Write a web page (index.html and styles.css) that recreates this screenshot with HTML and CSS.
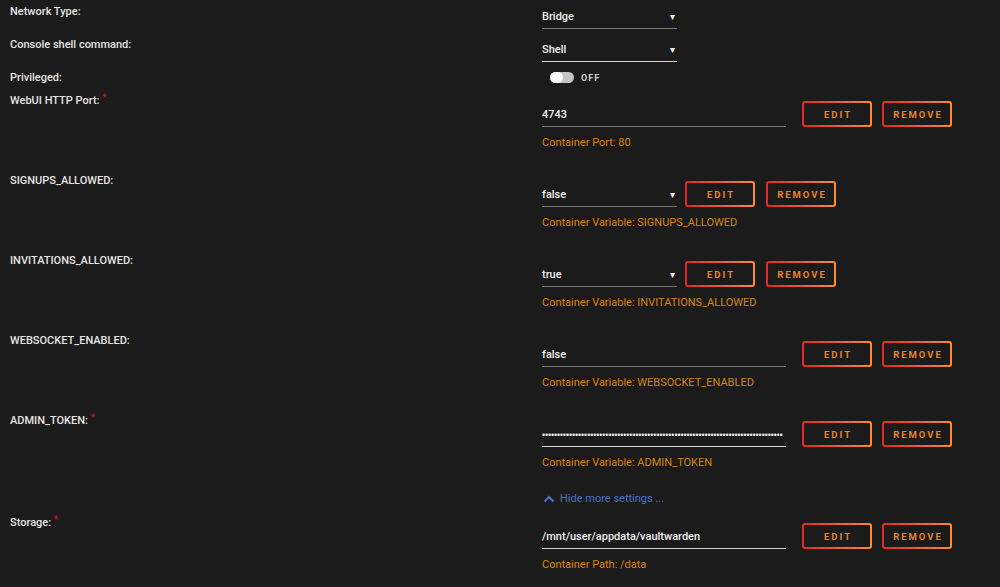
FILE: index.html
```html
<!DOCTYPE html>
<html lang="en">
  <head>
    <meta charset="UTF-8" />
    <meta name="viewport" content="width=device-width, initial-scale=1.0" />
    <title>Update Container</title>
    <link rel="stylesheet" href="styles.css">
  </head>
  <body>
    <div class="form">
      <div class="row plain first">
        <div class="label">Network Type:</div>
        <div class="field">
          <div class="select dim"><span>Bridge</span><span class="caret">▾</span></div>
        </div>
      </div>
      <div class="row plain">
        <div class="label">Console shell command:</div>
        <div class="field">
          <div class="select light"><span>Shell</span><span class="caret">▾</span></div>
        </div>
      </div>
      <div class="row toggle-row">
        <div class="label">Privileged:</div>
        <div class="field">
          <div class="switch"><span class="track"><span class="knob"></span></span><span class="state">OFF</span></div>
        </div>
      </div>

      <div class="row config">
        <div class="label">WebUI HTTP Port: <span class="req">*</span></div>
        <div class="field">
          <div class="line">
            <div class="text dim">4743</div>
            <button class="btn">EDIT</button>
            <button class="btn">REMOVE</button>
          </div>
          <div class="hint">Container Port: 80</div>
        </div>
      </div>

      <div class="row config">
        <div class="label">SIGNUPS_ALLOWED:</div>
        <div class="field">
          <div class="line">
            <div class="select dim"><span>false</span><span class="caret">▾</span></div>
            <button class="btn">EDIT</button>
            <button class="btn">REMOVE</button>
          </div>
          <div class="hint">Container Variable: SIGNUPS_ALLOWED</div>
        </div>
      </div>

      <div class="row config">
        <div class="label">INVITATIONS_ALLOWED:</div>
        <div class="field">
          <div class="line">
            <div class="select dim"><span>true</span><span class="caret">▾</span></div>
            <button class="btn">EDIT</button>
            <button class="btn">REMOVE</button>
          </div>
          <div class="hint">Container Variable: INVITATIONS_ALLOWED</div>
        </div>
      </div>

      <div class="row config">
        <div class="label">WEBSOCKET_ENABLED:</div>
        <div class="field">
          <div class="line">
            <div class="text dim">false</div>
            <button class="btn">EDIT</button>
            <button class="btn">REMOVE</button>
          </div>
          <div class="hint">Container Variable: WEBSOCKET_ENABLED</div>
        </div>
      </div>

      <div class="row config last">
        <div class="label">ADMIN_TOKEN: <span class="req">*</span></div>
        <div class="field">
          <div class="line">
            <div class="text light secret">••••••••••••••••••••••••••••••••••••••••••••••••••••••••••••••••••••••••••••••••</div>
            <button class="btn">EDIT</button>
            <button class="btn">REMOVE</button>
          </div>
          <div class="hint">Container Variable: ADMIN_TOKEN</div>
        </div>
      </div>

      <div class="row more">
        <div class="label"></div>
        <div class="field">
          <a class="toggle-more" href="#">
            <svg width="12" height="8" viewBox="0 0 12 8"><path d="M1.5 6.5 6 2l4.5 4.5" fill="none" stroke="#4a72c4" stroke-width="2.2"/></svg>
            Hide more settings ...
          </a>
        </div>
      </div>

      <div class="row config">
        <div class="label">Storage: <span class="req">*</span></div>
        <div class="field">
          <div class="line">
            <div class="text light">/mnt/user/appdata/vaultwarden</div>
            <button class="btn">EDIT</button>
            <button class="btn">REMOVE</button>
          </div>
          <div class="hint">Container Path: /data</div>
        </div>
      </div>
    </div>
  </body>
</html>
```

FILE: styles.css
```css
body {
  margin: 0;
  padding: 0 0 0 10px;
  background: #1c1b1b;
  color: #f2f2f2;
  font-family: Roboto, "Noto Sans", sans-serif;
  font-size: 11px;
  height: 587px;
  overflow: hidden;
}

.row {
  display: grid;
  grid-template-columns: 532px auto;
}

.label {
  line-height: 14px;
  font-weight: 500;
  color: #e4e4e4;
}

.req {
  color: #c21a1a;
  font-size: 10px;
  vertical-align: top;
  position: relative;
  top: -3px;
}

.first {
  padding-top: 5px;
}

.plain {
  height: 33px;
}

.toggle-row {
  height: 23px;
}

.select,
.text {
  box-sizing: border-box;
  height: 24px;
  display: flex;
  align-items: center;
  justify-content: space-between;
  border-bottom: 1px solid #8a8a8a;
  font-weight: 500;
  color: #f0f0f0;
}

.select {
  width: 135px;
  margin-right: 8px;
}

.text {
  width: 244px;
  margin-right: 16px;
}

.dim {
  border-bottom-color: #7a7a7a;
}

.light {
  border-bottom-color: #d6d6d6;
}

.caret {
  font-size: 10px;
  margin-right: 2px;
}

.secret {
  font-family: "Liberation Sans", sans-serif;
  font-size: 8.6px;
  white-space: nowrap;
  justify-content: flex-start;
  padding-top: 1px;
}

.switch {
  display: flex;
  align-items: center;
  padding-top: 1px;
  padding-left: 8px;
}

.track {
  width: 24px;
  height: 11px;
  border-radius: 6px;
  background: #c4c4c4;
  display: flex;
  align-items: center;
}

.knob {
  width: 13px;
  height: 11px;
  border-radius: 6px;
  background: #fafafa;
}

.state {
  margin-left: 7px;
  font-size: 9px;
  font-weight: 700;
  color: #cfcfcf;
  letter-spacing: 1px;
}

.config .field {
  padding-top: 7px;
  padding-bottom: 24px;
}

.line {
  display: flex;
  align-items: flex-end;
}

.btn + .btn {
  margin-left: 10px;
}

.select + .btn + .btn {
  margin-left: 11px;
}

.btn {
  box-sizing: border-box;
  width: 70px;
  height: 26px;
  border: 2px solid transparent;
  border-radius: 3px;
  background: linear-gradient(#1c1b1b, #1c1b1b) padding-box,
    linear-gradient(90deg, #e22828, #ff8c2f) border-box;
  color: #e8822f;
  font-family: Roboto, "Noto Sans", sans-serif;
  font-size: 9.5px;
  font-weight: 700;
  letter-spacing: 2px;
  padding: 0 0 0 2px;
  cursor: pointer;
}

.hint {
  margin-top: 9px;
  line-height: 14px;
  color: #d4860b;
}

.last .field {
  padding-bottom: 22px;
}

.more {
  height: 24px;
}

.toggle-more {
  display: flex;
  align-items: center;
  gap: 5px;
  line-height: 14px;
  color: #4a72c4;
  text-decoration: none;
  padding-left: 1px;
}
```
